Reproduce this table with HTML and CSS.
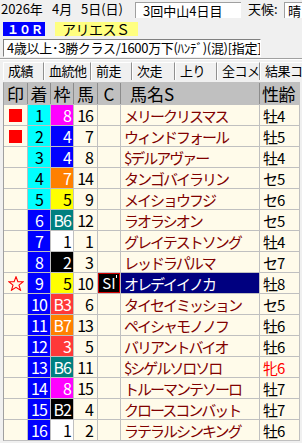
FILE: index.html
```html
<!DOCTYPE html>
<html lang="ja">
<head>
<meta charset="utf-8">
<link rel="stylesheet" href="styles.css">
</head>
<body>
<div class="top">
  <div class="date"><span class="y">2026年</span><span class="m">4月</span><span>5日(日)</span></div>
  <div class="box kai">3回中山4日目</div>
  <div class="tenko">天候:</div>
  <div class="box wx">晴</div>
</div>
<div class="race">
  <div class="rno">１０Ｒ</div>
  <div class="rname">アリエスＳ</div>
</div>
<div class="cond">4歳以上･3勝クラス/1600万下(ﾊﾝﾃﾞ)(混)[指定]</div>
<div class="sep"></div>
<div class="tabs">
  <div class="tab t1">成績</div>
  <div class="tab t2">血統他</div>
  <div class="tab t3">前走</div>
  <div class="tab t4">次走</div>
  <div class="tab t5">上り</div>
  <div class="tab t6">全コメ</div>
  <div class="tab t7">結果コメ</div>
</div>
<div class="grid">
  <div class="row hdr"><div>印</div><div>着</div><div>枠</div><div>馬</div><div>C</div><div class="hn">馬名S</div><div class="hs">性齢</div></div>
  <div class="row"><div class="mk"><i class="sq"></i></div><div class="ch cy">1</div><div class="wk w8">8</div><div class="um">16</div><div class="cc"></div><div class="nm">メリークリスマス</div><div class="sa">牡4</div></div>
  <div class="row"><div class="mk"><i class="sq"></i></div><div class="ch cy">2</div><div class="wk w4">4</div><div class="um">7</div><div class="cc"></div><div class="nm">ウィンドフォール</div><div class="sa">牡5</div></div>
  <div class="row"><div class="mk"></div><div class="ch cy">3</div><div class="wk w4">4</div><div class="um">8</div><div class="cc"></div><div class="nm">$デルアヴァー</div><div class="sa">牡4</div></div>
  <div class="row"><div class="mk"></div><div class="ch cy">4</div><div class="wk w7">7</div><div class="um">14</div><div class="cc"></div><div class="nm">タンゴバイラリン</div><div class="sa">セ5</div></div>
  <div class="row"><div class="mk"></div><div class="ch cy">5</div><div class="wk w5">5</div><div class="um">9</div><div class="cc"></div><div class="nm">メイショウフジ</div><div class="sa">セ6</div></div>
  <div class="row"><div class="mk"></div><div class="ch bl">6</div><div class="wk w6">B6</div><div class="um">12</div><div class="cc"></div><div class="nm">ラオラシオン</div><div class="sa">セ5</div></div>
  <div class="row"><div class="mk"></div><div class="ch bl">7</div><div class="wk w1">1</div><div class="um">1</div><div class="cc"></div><div class="nm">グレイテストソング</div><div class="sa">牡4</div></div>
  <div class="row"><div class="mk"></div><div class="ch bl">8</div><div class="wk w2">2</div><div class="um">3</div><div class="cc"></div><div class="nm">レッドラパルマ</div><div class="sa">セ7</div></div>
  <div class="row"><div class="mk"><svg class="star" viewBox="0 0 16 15" width="16" height="15"><polygon points="8,0.8 9.9,5.6 15.2,5.8 11,9.1 12.5,14.2 8,11.3 3.5,14.2 5,9.1 0.8,5.8 6.1,5.6" fill="none" stroke="#ff0000" stroke-width="1.1"/></svg></div><div class="ch bl">9</div><div class="wk w5">5</div><div class="um">10</div><div class="cc si">SI<i class="tick"></i></div><div class="nm sel">オレデイイノカ</div><div class="sa">牡8</div></div>
  <div class="row"><div class="mk"></div><div class="ch bl">10</div><div class="wk w3">B3</div><div class="um">6</div><div class="cc"></div><div class="nm">タイセイミッション</div><div class="sa">セ5</div></div>
  <div class="row"><div class="mk"></div><div class="ch bl">11</div><div class="wk w7">B7</div><div class="um">13</div><div class="cc"></div><div class="nm">ペイシャモノノフ</div><div class="sa">牡6</div></div>
  <div class="row"><div class="mk"></div><div class="ch bl">12</div><div class="wk w3">3</div><div class="um">5</div><div class="cc"></div><div class="nm">バリアントバイオ</div><div class="sa">牡6</div></div>
  <div class="row"><div class="mk"></div><div class="ch bl">13</div><div class="wk w6">B6</div><div class="um">11</div><div class="cc"></div><div class="nm">$シゲルソロソロ</div><div class="sa fm">牝6</div></div>
  <div class="row"><div class="mk"></div><div class="ch bl">14</div><div class="wk w8">8</div><div class="um">15</div><div class="cc"></div><div class="nm">トルーマンテソーロ</div><div class="sa">牡7</div></div>
  <div class="row"><div class="mk"></div><div class="ch bl">15</div><div class="wk w2">B2</div><div class="um">4</div><div class="cc"></div><div class="nm">クロースコンバット</div><div class="sa">牡7</div></div>
  <div class="row"><div class="mk"></div><div class="ch bl">16</div><div class="wk w1">1</div><div class="um">2</div><div class="cc"></div><div class="nm">ラテラルシンキング</div><div class="sa">牡6</div></div>
</div>
</body>
</html>
```
FILE: styles.css
```css
* { box-sizing: border-box; margin: 0; padding: 0; }
html, body { width: 302px; height: 443px; overflow: hidden; }
body {
  background: #f0f0f0;
  font-family: "Noto Sans CJK JP", "Noto Sans", sans-serif;
  color: #000;
}

/* top line */
.top { display: flex; height: 20px; align-items: flex-start; }
.date { width: 135px; display: flex; font-size: 13px; line-height: 18px; padding-left: 1px; white-space: nowrap; }
.date .y { width: 51px; }
.date .m { width: 29px; }
.box {
  margin-top: 2px; height: 16px; background: #fff;
  border-top: 1px solid #a0a0a0; border-left: 1px solid #a0a0a0;
  font-size: 13px; line-height: 15px; white-space: nowrap; overflow: hidden;
}
.kai { width: 106px; padding-left: 7px; }
.tenko { margin-left: 7px; width: 36px; font-size: 13px; line-height: 18px; }
.wx { flex: 1; padding-left: 3px; }

/* race line */
.race { display: flex; margin-top: 2px; height: 14px; }
.rno {
  margin-left: 3px; width: 42px; background: #0000ff; color: #fff;
  font-size: 12px; line-height: 14px; padding-left: 4px; font-weight: bold;
}
.rname {
  margin-left: 10px; width: 83px; background: #ffff80;
  font-size: 14px; line-height: 14px; padding-left: 7px; letter-spacing: -0.5px;
}

.cond {
  margin: 3px 0 0 3px; width: 258px; height: 18px; background: #fff;
  border: 1px solid; border-color: #808080 #ffffff #ffffff #808080;
  font-size: 13px; line-height: 16px; padding-left: 3px; letter-spacing: -0.3px;
  white-space: nowrap; overflow: hidden;
}
.sep { margin-top: 1px; border-top: 1px solid #a0a0a0; border-bottom: 1px solid #fff; }

/* tabs */
.tabs { display: flex; margin-top: 2px; height: 18px; padding-left: 3px; }
.tab {
  border-left: 1px solid #fff; border-right: 1px solid #909090; border-top: 1px solid #fff;
  font-size: 13px; line-height: 16px; padding-left: 4px; letter-spacing: -0.5px;
  white-space: nowrap; overflow: hidden;
}
.t1 { width: 41px; }
.t2 { width: 47px; }
.t3 { width: 41px; }
.t4 { width: 43px; }
.t5 { width: 42px; }
.t6 { width: 43px; }
.t7 { flex: 1; border-right: none; }

/* grid */
.grid {
  margin: 2px 0 0 3px; width: 297px;
  border: 1px solid #c0c0c0; border-left-color: #a0a0a0;
  display: flex; flex-direction: column; gap: 1px; background: #c0c0c0;
}
.row {
  display: grid;
  grid-template-columns: 23px 22px 22px 23px 22px 138px 39px;
  column-gap: 1px; background: #c0c0c0; height: 20px;
}
.row > div {
  background: #fffbea; height: 20px; overflow: hidden; white-space: nowrap;
  font-size: 16px; line-height: 19px; padding-top: 1px;
}
.hdr { height: 21px; background: #8c8c8c; }
.hdr > div {
  background: #c0c0c0; height: 21px; font-size: 17px; line-height: 21px; padding-top: 0; text-align: center;
}
.hdr > .hn { text-align: left; padding-left: 9px; }
.hdr > .hs { text-align: left; padding-left: 2px; letter-spacing: -0.5px; }

.row > .mk { display: flex; align-items: center; justify-content: center; padding-top: 0; }
.sq { display: block; width: 13px; height: 13px; background: #ff0000; margin-top: 1px; }
.star { display: block; margin-top: 1px; }

.ch { text-align: center; letter-spacing: -1px; }
.cy { background: #00ffff !important; color: #000; }
.bl { background: #0000ff !important; color: #fff; }

.wk { text-align: right; padding-right: 2px; letter-spacing: -1px; }
.w1 { background: #ffffff !important; color: #000; }
.w2 { background: #000000 !important; color: #fff; }
.w3 { background: #ff3838 !important; color: #fff; }
.w4 { background: #0000ff !important; color: #fff; }
.w5 { background: #ffff00 !important; color: #000; }
.w6 { background: #008080 !important; color: #fff; }
.w7 { background: #ff8000 !important; color: #fff; }
.w8 { background: #ff00ff !important; color: #fff; }

.um { text-align: right; padding-right: 4px; letter-spacing: -1px; }

.row > .cc { text-align: center; font-size: 15px; }
.row > .si {
  position: relative;
  background: #000; color: #fff;
  border: 1px solid #d00000; line-height: 17px; padding-top: 0;
}
.tick { position: absolute; right: 2px; top: 1px; width: 1px; height: 3px; background: #fff; }

.row > .nm { color: #800000; font-size: 15px; letter-spacing: -2px; padding-left: 3px; }
.row > .sel { background: #000080; color: #fff; }

.row > .sa { font-size: 15px; padding-left: 3px; letter-spacing: -1px; }
.row > .fm { color: #ff0000; }
```
